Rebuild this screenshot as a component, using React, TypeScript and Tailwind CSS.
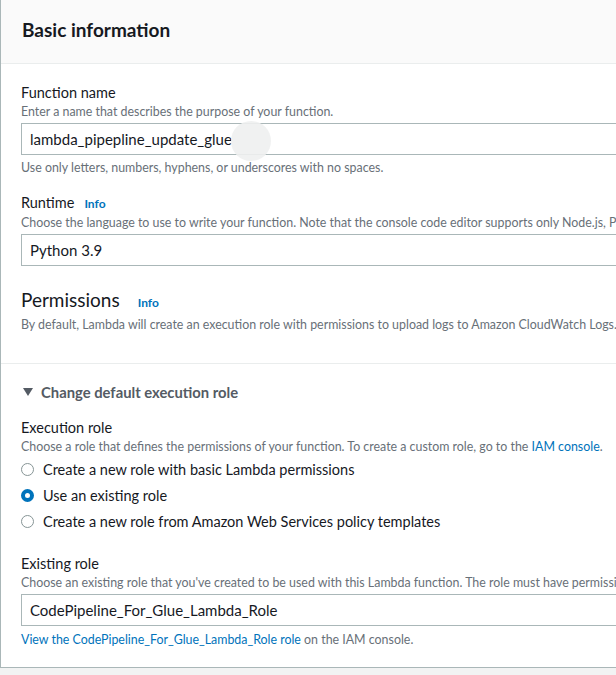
import React from 'react';

const font = { fontFamily: 'Lato, "Liberation Sans", sans-serif' };

const Label: React.FC<{ children: React.ReactNode; info?: boolean }> = ({ children, info }) => (
    <div className="flex items-baseline gap-[10px] text-[14.5px] leading-[20px] text-[#16191f]">
        <span>{children}</span>
        {info && <span className="text-[12px] font-bold text-[#0073bb]">Info</span>}
    </div>
);

const Desc: React.FC<{ children: React.ReactNode }> = ({ children }) => (
    <div className="whitespace-nowrap text-[12.4px] leading-[18px] text-[#687078]">{children}</div>
);

const Input: React.FC<{ value: string }> = ({ value }) => (
    <div className="mt-[2px] h-[32px] w-[900px] border border-[#aab7b8] px-[8px] text-[15px] leading-[30px] text-[#16191f]">
        {value}
    </div>
);

const Radio: React.FC<{ checked?: boolean; label: string }> = ({ checked, label }) => (
    <div className="flex h-[26px] items-center gap-[9px] text-[14.5px] text-[#16191f]">
        {checked ? (
            <span className="h-[13px] w-[13px] rounded-full border-[4px] border-[#0073bb] bg-white" />
        ) : (
            <span className="h-[13px] w-[13px] rounded-full border border-[#879596] bg-white" />
        )}
        <span>{label}</span>
    </div>
);

export default function App() {
    return (
        <div className="relative h-[675px] w-[616px] overflow-hidden bg-[#f2f3f3]" style={font}>
            <div className="w-[900px] border-b border-l border-[#aab7b8] bg-white">
                {/* Header */}
                <div className="flex h-[64px] items-center border-b border-[#eaeded] bg-[#fafafa] px-[21px]">
                    <h2 className="-mt-[2px] text-[19px] font-bold text-[#16191f]">Basic information</h2>
                </div>

                <div className="px-[20px] pt-[19px]">
                    <Label>Function name</Label>
                    <Desc>Enter a name that describes the purpose of your function.</Desc>
                    <Input value="lambda_pipepline_update_glue" />
                    <div className="mt-[4px]">
                        <Desc>Use only letters, numbers, hyphens, or underscores with no spaces.</Desc>
                    </div>

                    <div className="mt-[16px]">
                        <Label info>Runtime</Label>
                        <Desc>
                            Choose the language to use to write your function. Note that the console code editor supports only Node.js, Python, and Ruby.
                        </Desc>
                        <Input value="Python 3.9" />
                    </div>

                    <div className="mt-[20px] flex items-baseline gap-[18px]">
                        <span className="text-[19px] text-[#16191f]">Permissions</span>
                        <span className="text-[12px] font-bold text-[#0073bb]">Info</span>
                    </div>
                    <div className="mt-[1px]">
                        <Desc>
                            By default, Lambda will create an execution role with permissions to upload logs to Amazon CloudWatch Logs. You can customize this default role later.
                        </Desc>
                    </div>
                </div>

                <div className="mt-[29px] border-t border-[#eaeded]" />

                <div className="px-[20px] pt-[17px] pb-[18px]">
                    <div className="flex items-center gap-[8px] text-[14.8px] font-bold text-[#545b64]">
                        <svg width="10" height="8" viewBox="0 0 10 8" className="ml-[2px]">
                            <path d="M0 0 H10 L5 8 Z" fill="#545b64" />
                        </svg>
                        <span>Change default execution role</span>
                    </div>

                    <div className="mt-[15px]">
                        <Label>Execution role</Label>
                        <Desc>
                            Choose a role that defines the permissions of your function. To create a custom role, go to the{' '}
                            <span className="text-[#0073bb]">IAM console</span>.
                        </Desc>
                    </div>

                    <div className="mt-[1px]">
                        <Radio label="Create a new role with basic Lambda permissions" />
                        <Radio checked label="Use an existing role" />
                        <Radio label="Create a new role from Amazon Web Services policy templates" />
                    </div>

                    <div className="mt-[19px]">
                        <Label>Existing role</Label>
                        <Desc>
                            Choose an existing role that you've created to be used with this Lambda function. The role must have permission to upload logs to Amazon CloudWatch Logs.
                        </Desc>
                        <Input value="CodePipeline_For_Glue_Lambda_Role" />
                        <div className="mt-[5px]">
                            <Desc>
                                <span className="text-[#0073bb]">View the CodePipeline_For_Glue_Lambda_Role role</span> on the IAM console.
                            </Desc>
                        </div>
                    </div>
                </div>
            </div>

            {/* faint cursor artifact over the input */}
            <div className="pointer-events-none absolute left-[231px] top-[121px] h-[40px] w-[40px] rounded-full bg-[#eef0f0]/90" />
        </div>
    );
}
